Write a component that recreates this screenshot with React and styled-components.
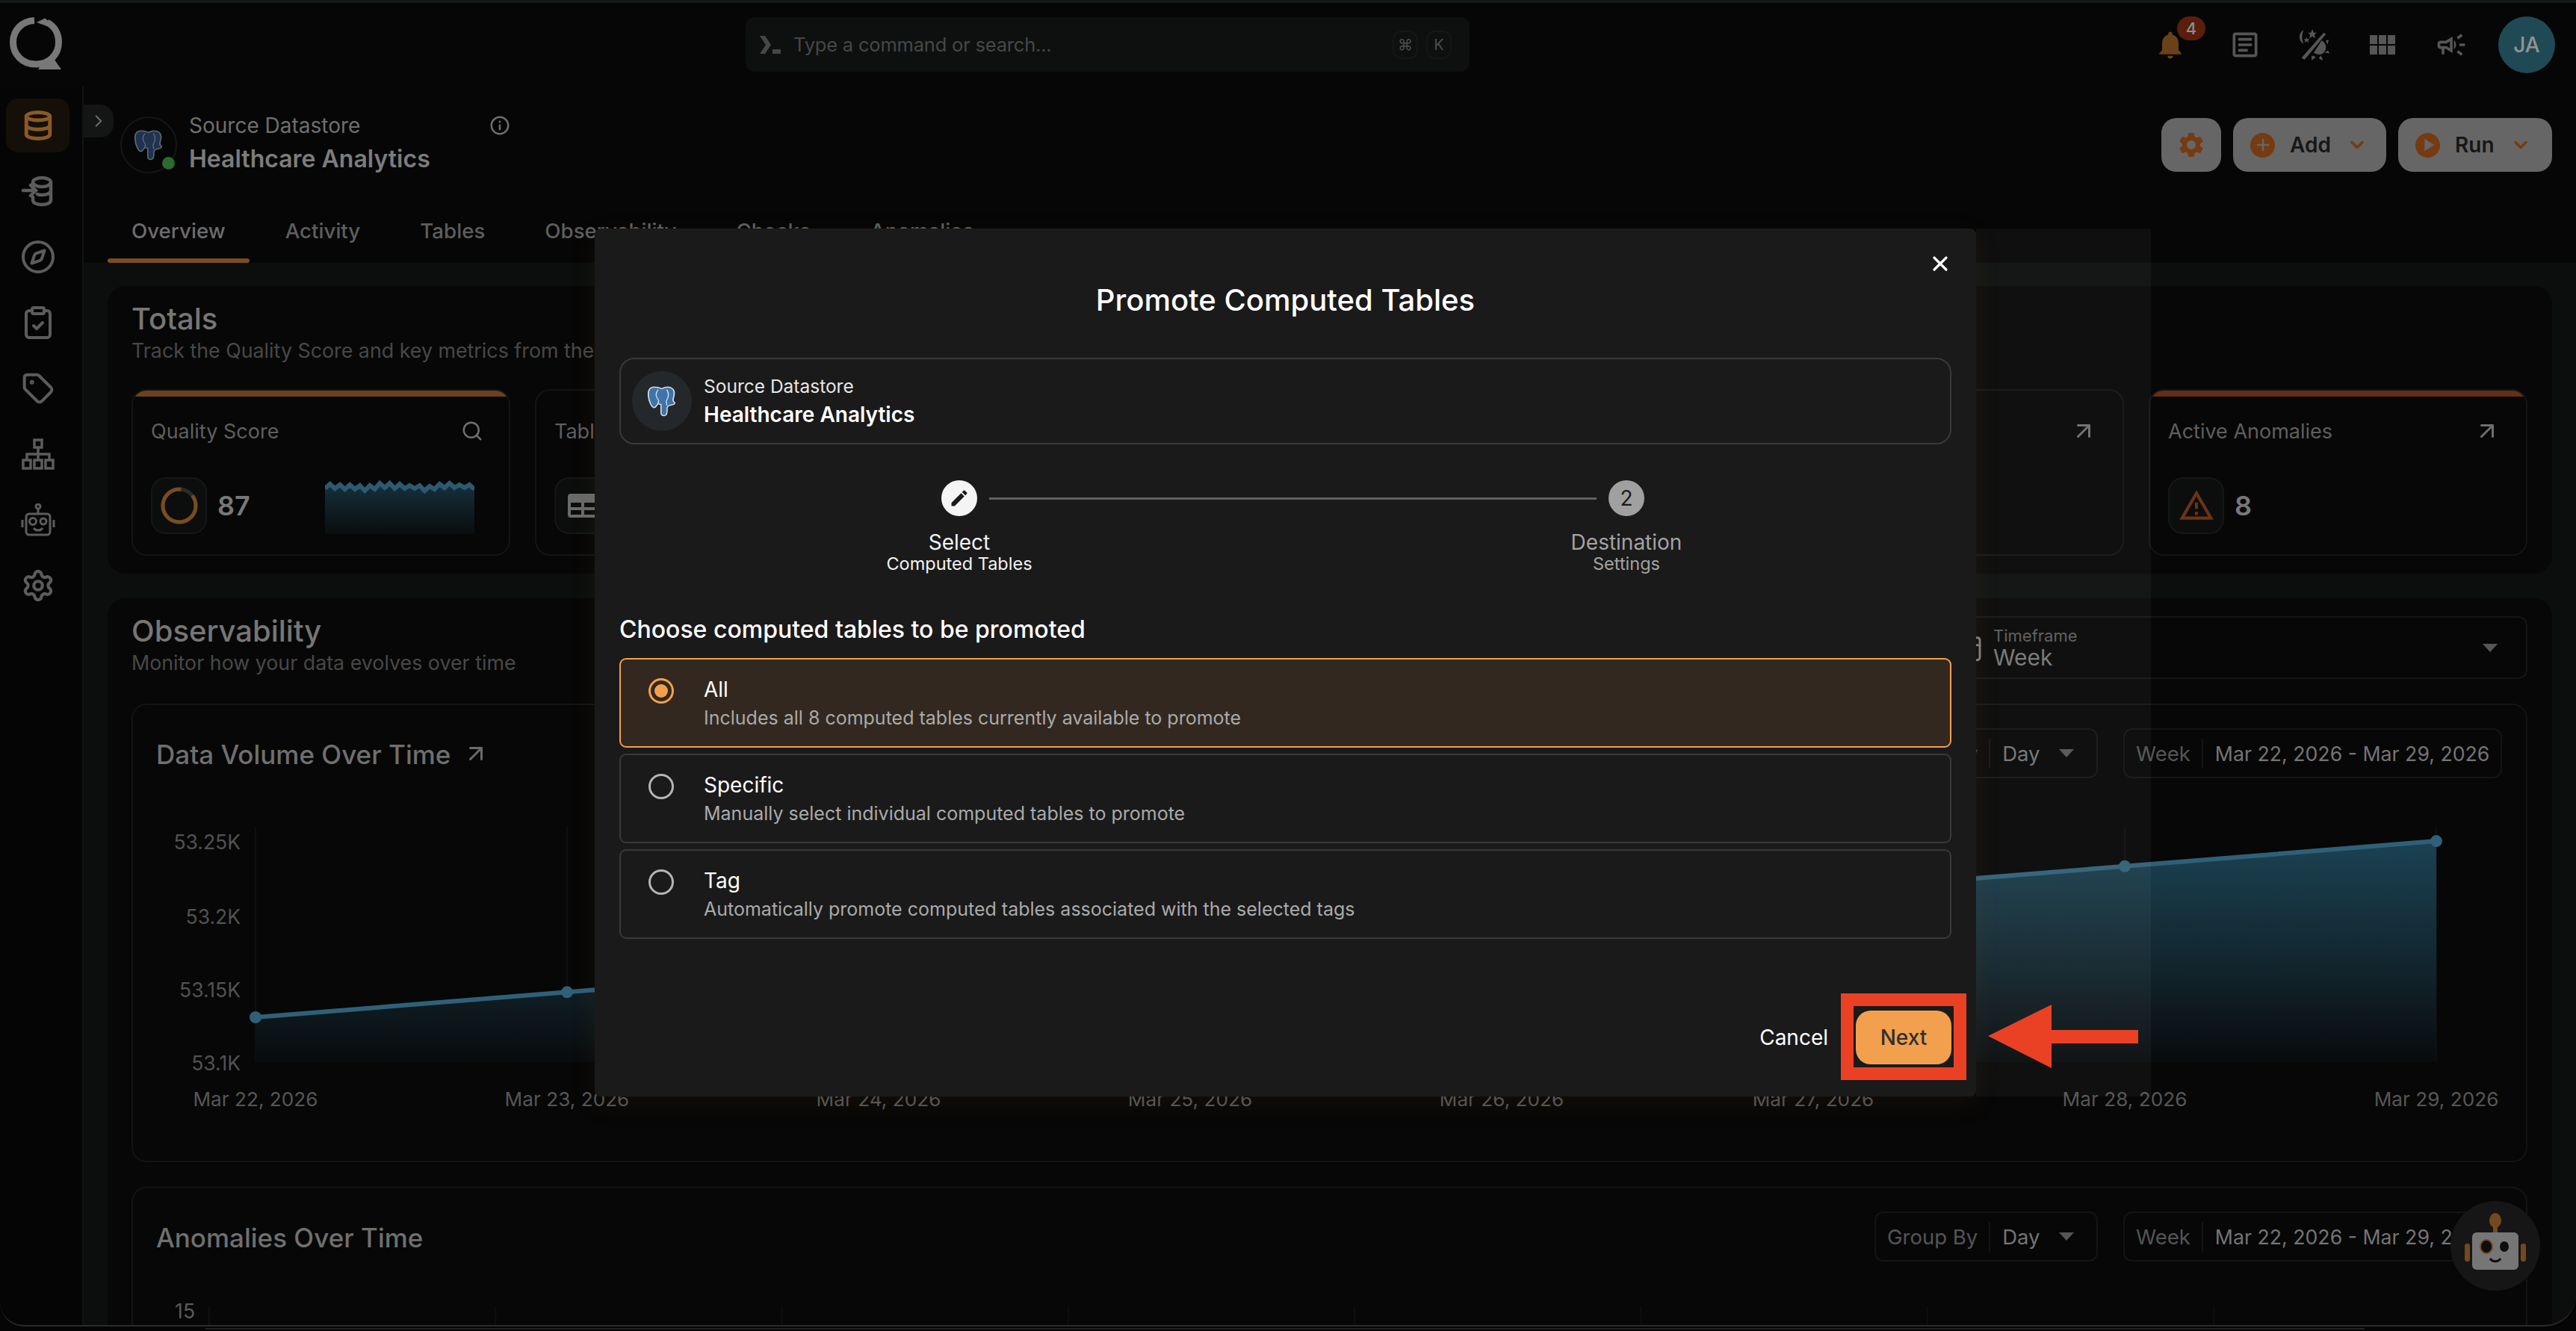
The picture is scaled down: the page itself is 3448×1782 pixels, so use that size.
import React from 'react';
import styled, { createGlobalStyle } from 'styled-components';
import { Database, Compass, ClipboardCheck, Tag, Settings, ChevronRight, ChevronDown, ArrowUpRight, Search, X, Calendar } from 'lucide-react';
import { MdNotifications, MdOutlineArticle, MdOutlineCampaign, MdSettings, MdEdit, MdInfoOutline, MdOutlineWarningAmber, MdAdd, MdPlayArrow } from 'react-icons/md';

const GlobalStyle = createGlobalStyle`
  html, body {
    margin: 0;
    padding: 0;
    background: #050505;
    overflow: hidden;
  }
  * { box-sizing: border-box; }
  body { font-family: Inter, "Liberation Sans", sans-serif; }
`;

const Shell = styled.div`
  position: relative;
  width: 3448px;
  height: 1782px;
  overflow: hidden;
  background: #060606;
  display: flex;
  flex-direction: column;
`;

const TopStripe = styled.div`
  height: 4px;
  flex: none;
  background: #151919;
`;

const TopBar = styled.header`
  height: 112px;
  flex: none;
  display: flex;
  align-items: flex-start;
  padding: 0 28px 0 13px;
  background: #060606;
`;

const LogoWrap = styled.div`
  width: 70px;
  height: 70px;
  margin-top: 19px;
  flex: none;
`;

const CommandBar = styled.div`
  width: 969px;
  height: 73px;
  margin: 19px 0 0 915px;
  border-radius: 12px;
  background: #0d100f;
  display: flex;
  align-items: center;
  padding: 0 24px 0 18px;
  color: #474747;
  font-size: 25.5px;
`;

const CommandText = styled.span`
  margin-left: 16px;
  flex: 1;
  letter-spacing: -0.2px;
`;

const Kbd = styled.span`
  width: 34px;
  height: 38px;
  margin-left: 11px;
  border: 2px solid #151716;
  border-radius: 12px;
  display: flex;
  align-items: center;
  justify-content: center;
  color: #4d4d4d;
  font-size: 20px;
`;

const TopIcons = styled.div`
  margin-left: auto;
  display: flex;
  align-items: center;
  gap: 48px;
  height: 112px;
`;

const TopIcon = styled.span`
  position: relative;
  width: 44px;
  height: 44px;
  display: flex;
  align-items: center;
  justify-content: center;
  color: ${(p) => p.$color || '#565656'};
  margin-right: ${(p) => p.$gapRight || 0}px;
`;

const Badge = styled.span`
  position: absolute;
  top: -16px;
  left: 31px;
  width: 38px;
  height: 32px;
  border-radius: 16px;
  background: #5a1e0c;
  color: #8d8d8d;
  font-size: 22px;
  font-weight: 500;
  display: flex;
  align-items: center;
  justify-content: center;
`;

const Avatar = styled.span`
  width: 76px;
  height: 76px;
  margin-left: -7px;
  border-radius: 50%;
  background: #1f4a55;
  color: #939393;
  font-size: 28px;
  font-weight: 500;
  display: flex;
  align-items: center;
  justify-content: center;
`;

const Body = styled.div`
  flex: 1;
  min-height: 0;
  display: flex;
`;

const Sidebar = styled.nav`
  width: 112px;
  flex: none;
  border-right: 2px solid #131313;
  background: #050505;
  padding: 16px 0 0 8px;
  display: flex;
  flex-direction: column;
  gap: 16px;
`;

const NavItem = styled.a`
  width: 85px;
  height: 72px;
  border-radius: 16px;
  background: ${(p) => (p.$active ? '#150f09' : 'transparent')};
  color: ${(p) => (p.$active ? '#8a5a26' : '#5c5c5c')};
  display: flex;
  align-items: center;
  justify-content: center;
`;

const Main = styled.main`
  position: relative;
  flex: 1;
  min-width: 0;
  display: flex;
  flex-direction: column;
`;

const CollapseTab = styled.span`
  position: absolute;
  top: 24px;
  left: 0;
  width: 40px;
  height: 44px;
  border-radius: 0 18px 18px 0;
  background: #141515;
  color: #6a6a6a;
  display: flex;
  align-items: center;
  justify-content: center;
`;

const PageHead = styled.section`
  height: 236px;
  flex: none;
  background: #060606;
  padding-top: 40px;
`;

const HeadRow = styled.div`
  height: 76px;
  display: flex;
  align-items: center;
  padding: 0 32px 0 49px;
`;

const StoreLogo = styled.span`
  position: relative;
  width: 76px;
  height: 76px;
  border-radius: 50%;
  border: 2px solid #161616;
  display: flex;
  align-items: center;
  justify-content: center;
  flex: none;
`;

const OnlineDot = styled.span`
  position: absolute;
  right: 1px;
  bottom: 3px;
  width: 17px;
  height: 17px;
  border-radius: 50%;
  background: #2c6a2e;
`;

const StoreText = styled.div`
  margin-left: 16px;
  width: 431px;
`;

const StoreLabelRow = styled.div`
  display: flex;
  align-items: center;
  justify-content: space-between;
  color: #6f6f6f;
  font-size: 28px;
  line-height: 34px;
  margin-top: -4px;
`;

const StoreName = styled.div`
  color: #7c7c7c;
  font-size: 32px;
  font-weight: 600;
  line-height: 40px;
  margin-top: 8px;
`;

const Actions = styled.div`
  margin-left: auto;
  display: flex;
  gap: 16px;
`;

const ActionButton = styled.button`
  width: ${(p) => p.$width}px;
  height: 72px;
  border: 0;
  border-radius: 20px;
  background: #666666;
  color: #171717;
  font: 600 28px Inter, sans-serif;
  display: flex;
  align-items: center;
  justify-content: ${(p) => (p.$iconOnly ? 'center' : 'flex-start')};
  padding: ${(p) => (p.$iconOnly ? 0 : '0 0 0 23px')};
`;

const ActionDisc = styled.span`
  width: 33px;
  height: 33px;
  border-radius: 50%;
  background: #753b12;
  color: #666666;
  margin-right: 20px;
  display: flex;
  align-items: center;
  justify-content: center;
`;

const ActionChevron = styled.span`
  margin-left: 21px;
  color: #753b12;
  display: flex;
`;

const Tabs = styled.div`
  height: 86px;
  margin: 34px 0 0 32px;
  display: flex;
  gap: 16px;
`;

const TabItem = styled.a`
  position: relative;
  padding: 0 32px;
  display: flex;
  align-items: center;
  color: ${(p) => (p.$active ? '#6d6d6d' : '#5e5e5e')};
  font-size: 27.7px;
  font-weight: 500;

  ${(p) => p.$active && `
    &::after {
      content: '';
      position: absolute;
      left: 0;
      right: 0;
      bottom: 0;
      height: 6px;
      border-radius: 3px;
      background: #7a4c20;
    }
  `}
`;

const Content = styled.div`
  flex: 1;
  min-height: 0;
  overflow: hidden;
  background: #0b0e0d;
  padding: 31px 32px 0;
  display: flex;
  flex-direction: column;
  gap: 33px;
`;

const Panel = styled.section`
  flex: ${(p) => (p.$grow ? 1 : 'none')};
  background: #070707;
  border-radius: 24px;
  padding: 20px 33px 24px 32px;
`;

const SectionTitle = styled.h2`
  margin: 0;
  color: #767676;
  font-size: 40px;
  font-weight: 500;
  line-height: 48px;
`;

const SectionSub = styled.p`
  margin: 2px 0 0;
  color: #484848;
  font-size: 26.8px;
  line-height: 32px;
  white-space: nowrap;
`;

const CardGrid = styled.div`
  margin-top: 36px;
  display: grid;
  grid-template-columns: repeat(6, 1fr);
  gap: 33px;
`;

const MetricCard = styled.article`
  position: relative;
  height: 223px;
  border: 2px solid #141414;
  border-radius: 20px;
  overflow: hidden;
  padding: 38px 24px 0;

  ${(p) => p.$accent && `
    &::before {
      content: '';
      position: absolute;
      top: 0;
      left: 0;
      right: 0;
      height: 8px;
      background: ${p.$accent};
    }
  `}
`;

const MetricHead = styled.div`
  height: 32px;
  display: flex;
  align-items: center;
  justify-content: space-between;
  color: #5f5f5f;
  font-size: 27px;
  padding-right: 10px;
`;

const MetricIcon = styled.span`
  color: #6e6e6e;
  display: flex;
`;

const MetricRow = styled.div`
  margin-top: 46px;
  display: flex;
  align-items: center;
`;

const MetricBox = styled.span`
  width: 75px;
  height: 76px;
  flex: none;
  border: 2px solid #151716;
  border-radius: 20px;
  background: #0b0e0d;
  display: flex;
  align-items: center;
  justify-content: center;
  color: ${(p) => p.$color || '#6a6a6a'};
`;

const MetricValue = styled.span`
  margin-left: 14px;
  color: #787878;
  font-size: 36px;
  font-weight: 600;
`;

const Spark = styled.svg`
  margin-left: auto;
  margin-right: 22px;
  display: block;
`;

const ObsHead = styled.div`
  display: flex;
  justify-content: space-between;
  align-items: flex-start;
  margin-bottom: 33px;
`;

const TimeSelect = styled.div`
  width: 790px;
  height: 84px;
  margin-top: 4px;
  border: 2px solid #151515;
  border-radius: 12px;
  padding: 0 38px 0 20px;
  display: flex;
  align-items: center;
  color: #7a7a7a;
`;

const TimeText = styled.div`
  margin-left: 13px;
  flex: 1;
`;

const TimeLabel = styled.div`
  color: #5c5c5c;
  font-size: 22px;
  line-height: 26px;
`;

const TimeValue = styled.div`
  color: #767676;
  font-size: 30px;
  line-height: 32px;
`;

const Caret = styled.span`
  width: 0;
  height: 0;
  flex: none;
  border-left: 10px solid transparent;
  border-right: 10px solid transparent;
  border-top: 11px solid #565656;
`;

const ChartCard = styled.article`
  height: ${(p) => p.$height}px;
  margin-bottom: 33px;
  border: 2px solid #131313;
  border-radius: 20px;
  padding: 31px 32px 0 31px;
`;

const ChartHead = styled.div`
  height: 67px;
  display: flex;
  align-items: center;
`;

const ChartTitle = styled.h3`
  margin: 0;
  padding-top: 3px;
  color: #6f6f6f;
  font-size: 35px;
  font-weight: 500;
`;

const TitleArrow = styled.span`
  margin-left: 16px;
  color: #6a6a6a;
  display: flex;
`;

const Controls = styled.div`
  margin-left: auto;
  display: flex;
  gap: 34px;
`;

const Control = styled.div`
  height: 67px;
  width: ${(p) => p.$width}px;
  border: 2px solid #141414;
  border-radius: 12px;
  padding: 0 30px 0 15px;
  display: flex;
  align-items: center;
  font-size: 27.5px;
  white-space: nowrap;
`;

const ControlLabel = styled.span`
  color: #555555;
  padding-right: 15px;
  height: 40px;
  line-height: 40px;
  border-right: 2px solid #141414;
  margin-right: 16px;
`;

const ControlValue = styled.span`
  color: #747474;
  flex: ${(p) => (p.$fill ? 1 : 'none')};
  font-size: ${(p) => (p.$fill ? 27.5 : 26.7)}px;
`;

const ChartSvg = styled.svg`
  display: block;
  margin-left: -31px;
  font-family: Inter, sans-serif;
`;

const GhostBand = styled.div`
  position: absolute;
  left: 2645px;
  top: 306px;
  width: 234px;
  height: 1162px;
  background: rgba(255, 255, 255, 0.04);
`;

const Dialog = styled.div`
  position: absolute;
  left: 796px;
  top: 306px;
  width: 1849px;
  height: 1162px;
  background: #1a1a1a;
  border-radius: 8px;
  box-shadow: 0 10px 36px rgba(140, 85, 30, 0.1);
  padding: 70px 33px 0;
  color: #ffffff;
`;

const CloseButton = styled.span`
  position: absolute;
  top: 31px;
  right: 32px;
  color: #ffffff;
  display: flex;
`;

const DialogTitle = styled.h2`
  margin: 0;
  text-align: center;
  font-size: 40px;
  font-weight: 500;
  line-height: 52px;
`;

const SourceCard = styled.div`
  margin-top: 51px;
  height: 116px;
  border: 2px solid #393939;
  border-radius: 20px;
  padding: 0 15px;
  display: flex;
  align-items: center;
`;

const SourceLogo = styled.span`
  width: 80px;
  height: 80px;
  border-radius: 50%;
  background: #25282b;
  display: flex;
  align-items: center;
  justify-content: center;
  flex: none;
`;

const SourceText = styled.div`
  margin-left: 16px;
`;

const SourceLabel = styled.div`
  font-size: 24.5px;
  line-height: 30px;
  color: #e6e6e6;
`;

const SourceName = styled.div`
  margin-top: 6px;
  font-size: 28px;
  font-weight: 600;
  line-height: 34px;
`;

const Stepper = styled.div`
  margin-top: 48px;
  padding: 0 285px 0 305px;
  display: flex;
`;

const Step = styled.div`
  width: 300px;
  flex: none;
  display: flex;
  flex-direction: column;
  align-items: center;
  color: ${(p) => (p.$done ? '#f2f2f2' : '#a3a3a3')};
`;

const StepCircle = styled.span`
  width: 48px;
  height: 48px;
  border-radius: 50%;
  background: ${(p) => (p.$done ? '#f4f4f4' : '#a0a0a0')};
  color: #1a1a1a;
  font-size: 28px;
  display: flex;
  align-items: center;
  justify-content: center;
`;

const StepLabel = styled.span`
  margin-top: 18px;
  font-size: 28px;
  line-height: 34px;
`;

const StepHint = styled.span`
  margin-top: -2px;
  font-size: 23.5px;
  line-height: 28px;
`;

const StepLine = styled.span`
  flex: 1;
  height: 3px;
  margin: 23px -110px 0;
  background: #616161;
`;

const ChooseTitle = styled.h3`
  margin: 54px 0 0;
  font-size: 32px;
  font-weight: 500;
  line-height: 40px;
`;

const OptionList = styled.div`
  margin-top: 18px;
  display: flex;
  flex-direction: column;
  gap: 8px;
`;

const Option = styled.label`
  height: 120px;
  border: 2px solid ${(p) => (p.$active ? '#f29f4b' : '#393939')};
  border-radius: 9px;
  background: ${(p) => (p.$active ? '#322820' : 'transparent')};
  padding: 23px 0 0 37px;
  display: flex;
`;

const Radio = styled.span`
  width: 34px;
  height: 34px;
  margin: 2px 40px 0 0;
  border-radius: 50%;
  border: 3px solid ${(p) => (p.$active ? '#f29f4b' : '#b5b5b5')};
  display: flex;
  align-items: center;
  justify-content: center;
  flex: none;

  &::after {
    content: '';
    width: 18px;
    height: 18px;
    border-radius: 50%;
    background: ${(p) => (p.$active ? '#f2a04e' : 'transparent')};
  }
`;

const OptionLabel = styled.div`
  font-size: 28px;
  line-height: 34px;
`;

const OptionDesc = styled.div`
  margin-top: 6px;
  color: #aaaaaa;
  font-size: 25px;
  line-height: 30px;
`;

const DialogFooter = styled.div`
  margin-top: 96px;
  display: flex;
  align-items: center;
  justify-content: flex-end;
  gap: 37px;
`;

const CancelLink = styled.span`
  font-size: 28px;
`;

const NextButton = styled.button`
  width: 128px;
  height: 72px;
  border: 0;
  border-radius: 20px;
  background: #f2a04e;
  color: #2f2f2f;
  font: 500 28px Inter, sans-serif;
`;

const CalloutBox = styled.div`
  position: absolute;
  left: 2464px;
  top: 1330px;
  width: 168px;
  height: 116px;
  border: 17px solid #ea4125;
`;

const CalloutArrow = styled.svg`
  position: absolute;
  left: 2661px;
  top: 1345px;
`;

const BotBubble = styled.span`
  position: absolute;
  left: 3280px;
  top: 1608px;
  width: 120px;
  height: 120px;
  border-radius: 50%;
  background: #161616;
  display: flex;
  align-items: center;
  justify-content: center;
`;

const WindowEdge = styled.div`
  position: absolute;
  left: 0;
  right: 0;
  top: 0;
  height: 1776px;
  border-bottom: 2px solid #2b2b2b;
  border-radius: 0 0 42px 32px;
  box-shadow: 0 0 0 24px #050505;
  pointer-events: none;
`;

const WindowEdgeBack = styled.div`
  position: absolute;
  left: 275px;
  width: 2890px;
  top: 1778px;
  height: 2px;
  background: #222222;
`;

const Logo = () => (
  <svg width="70" height="70" viewBox="0 0 70 70" fill="none">
    <path d="M33 4.5C17 5 4.5 17 4.5 33.5C4.5 50 17 63 35 63C53 63 65.5 50 65.5 33.5C65.5 22 60 12 50 7" stroke="#787878" strokeWidth="9" />
    <path d="M47 1.5L36 7L50 12L53 6Z" fill="#787878" />
    <path d="M48 56L58 54L69 70H38Z" fill="#787878" />
  </svg>
);

const Elephant = ({ fill = '#3f74ab', stroke = '#d5dde6' }) => (
  <svg width="40" height="42" viewBox="0 0 32 38" fill="none" preserveAspectRatio="none">
    <path d="M8 2C2 2 1 7 1.5 13C2 19 5 27 7.5 27C10 27 10.5 23 12 22C13 23 14 23 15 23L15 33C15 36 17 37 19 36.5C22 36 21.5 32 21.5 29C21.5 26 22 24.5 25 24C29 23.5 31 21.5 29 20C27 19 28 16 29 12C30 7 28 2 22 2C19 2 17.5 3 16 4C13 2.5 11 2 8 2Z" fill={fill} stroke={stroke} strokeWidth="1.3" />
    <path d="M12 5C9 9 9 14 12 17C13 19 12 21 12 22M21 5C24 9 23 15 21 18C20 20 21 22 21.5 24" stroke={stroke} strokeWidth="1.1" />
  </svg>
);

const DbArrowIcon = () => (
  <svg width="46" height="42" viewBox="0 0 46 42" fill="none" stroke="currentColor" strokeWidth="4.5" strokeLinecap="round">
    <ellipse cx="28" cy="9" rx="12" ry="6" />
    <path d="M16 10V14M40 9V33C40 37 34 39 28 39C22 39 16 37 16 33V29M40 20C40 24 34 26 28 26C26 26 24 26 22 25" />
    <path d="M3 20H19M13 13L20 20L13 27" />
  </svg>
);

const HierarchyIcon = () => (
  <svg width="44" height="42" viewBox="0 0 44 42" fill="none" stroke="currentColor" strokeWidth="3.5">
    <rect x="17" y="2" width="10" height="10" />
    <rect x="2" y="29" width="10" height="11" />
    <rect x="17" y="29" width="10" height="11" />
    <rect x="32" y="29" width="10" height="11" />
    <path d="M22 12V29M7 29V21H37V29" />
  </svg>
);

const RobotIcon = () => (
  <svg width="46" height="44" viewBox="0 0 46 44" fill="none" stroke="currentColor" strokeWidth="3">
    <circle cx="23" cy="4" r="3" />
    <path d="M23 7V14" />
    <rect x="7" y="14" width="32" height="28" rx="4" />
    <circle cx="16" cy="24" r="4.5" />
    <circle cx="30" cy="24" r="4" />
    <path d="M17 33C20 37 26 37 29 33M2 22V32M44 22V32" />
  </svg>
);

const ThemeIcon = () => (
  <svg width="46" height="46" viewBox="0 0 46 46" fill="#565656">
    <path d="M9 2C1 6 1 18 9 22C6 16 6 8 9 2Z" />
    <path d="M21 1L23 6H27L24 9L25 14L21 11L17 14L18 9L15 6H19Z" />
    <path d="M13 12L14 15H17L15 17L16 20L13 18L10 20L11 17L9 15H12Z" />
    <path d="M37 6L40 8L10 44L6 41Z" />
    <path d="M34 17C41 21 42 29 37 34C33 38 27 37 23 34Z" />
    <path d="M40 17L44 16L42 23ZM43 31L45 35L38 34ZM33 38L36 45L30 42ZM20 38L26 40L20 45Z" />
  </svg>
);

const GridIcon = () => (
  <svg width="34" height="26" viewBox="0 0 34 26" fill="#565656">
    <rect x="0" y="0" width="10" height="12" />
    <rect x="12" y="0" width="10" height="12" />
    <rect x="24" y="0" width="10" height="12" />
    <rect x="0" y="14" width="10" height="12" />
    <rect x="12" y="14" width="10" height="12" />
    <rect x="24" y="14" width="10" height="12" />
  </svg>
);

const TerminalIcon = () => (
  <svg width="30" height="30" viewBox="0 0 30 30" fill="#474747">
    <path d="M1 3H8L16 15L8 27H1L9 15Z" />
    <rect x="18" y="21" width="11" height="6" />
  </svg>
);

const TableIcon = () => (
  <svg width="40" height="32" viewBox="0 0 40 32" fill="none" stroke="currentColor" strokeWidth="4">
    <rect x="2" y="2" width="36" height="28" rx="2" fill="none" />
    <path d="M2 8H38" strokeWidth="8" />
    <path d="M2 20H38M20 8V30" />
  </svg>
);

const Ring = () => (
  <svg width="52" height="52" viewBox="0 0 52 52" fill="none">
    <circle cx="26" cy="26" r="22" stroke="#2a2a2a" strokeWidth="5" />
    <circle cx="26" cy="26" r="22" stroke="#7a4c20" strokeWidth="5" strokeDasharray="120 138" transform="rotate(-38 26 26)" />
  </svg>
);

const sparkPoints = [15, 9, 15, 10, 16, 10, 16, 11, 18, 11, 16, 8, 14, 8, 15, 9, 15, 11, 15, 11, 18, 12, 16, 9, 14, 8, 14, 10, 14, 10, 16];

const Sparkline = () => {
  const line = sparkPoints.map((y, i) => `${(i * 200) / (sparkPoints.length - 1)},${y}`).join(' ');
  return (
    <Spark width="200" height="76" viewBox="0 0 200 76" fill="none">
      <defs>
        <linearGradient id="sparkFill" x1="0" y1="0" x2="0" y2="1">
          <stop offset="0" stopColor="#16303c" />
          <stop offset="1" stopColor="#0a0d0e" />
        </linearGradient>
      </defs>
      <polygon points={`0,76 ${line} 200,76`} fill="url(#sparkFill)" />
      <polyline points={line} stroke="#2c5a72" strokeWidth="6" />
    </Spark>
  );
};

const dates = ['Mar 22, 2026', 'Mar 23, 2026', 'Mar 24, 2026', 'Mar 25, 2026', 'Mar 26, 2026', 'Mar 27, 2026', 'Mar 28, 2026', 'Mar 29, 2026'];
const volumeTicks = [['53.25K', 1128], ['53.2K', 1228], ['53.15K', 1326], ['53.1K', 1424]];
const plotX = (i) => 343 + i * 417;
const plotY = (i) => 1363 - i * 33.7;

const VolumeChart = () => {
  const line = dates.map((d, i) => `${plotX(i)},${plotY(i)}`).join(' ');
  return (
    <ChartSvg width="3202" height="510" viewBox="179 1043 3202 510" fill="none">
      <defs>
        <linearGradient id="areaFill" gradientUnits="userSpaceOnUse" x1="0" y1="1127" x2="0" y2="1423">
          <stop offset="0" stopColor="#1b4252" />
          <stop offset="0.6" stopColor="#11232b" />
          <stop offset="1" stopColor="#090b0c" />
        </linearGradient>
      </defs>
      {dates.map((d, i) => (
        <line key={d} x1={plotX(i)} x2={plotX(i)} y1="1108" y2="1423" stroke="#0f0f0f" strokeWidth="2" />
      ))}
      <polygon points={`343,1423 ${line} ${plotX(7)},1423`} fill="url(#areaFill)" />
      <polyline points={line} stroke="#2f6078" strokeWidth="6" />
      {dates.map((d, i) => (
        <circle key={d} cx={plotX(i)} cy={plotY(i)} r="8" fill="#2f6078" />
      ))}
      {volumeTicks.map(([label, y]) => (
        <text key={label} x="323" y={y + 10} textAnchor="end" fill="#525252" fontSize="26.5">{label}</text>
      ))}
      {dates.map((d, i) => (
        <text key={d} x={plotX(i)} y="1482" textAnchor="middle" fill="#565656" fontSize="26.2">{d}</text>
      ))}
    </ChartSvg>
  );
};

const AnomalyChart = () => (
  <ChartSvg width="3202" height="92" viewBox="179 1690 3202 92" fill="none">
    {[0, 1, 2, 3, 4, 5, 6, 7].map((i) => (
      <line key={i} x1={281 + i * 383.3} x2={281 + i * 383.3} y1="1750" y2="1782" stroke="#0f0f0f" strokeWidth="2" />
    ))}
    <text x="262" y="1766" textAnchor="end" fill="#5a5a5a" fontSize="26.5">15</text>
  </ChartSvg>
);

const ChartControls = () => (
  <Controls>
    <Control $width={299}>
      <ControlLabel>Group By</ControlLabel>
      <ControlValue $fill>Day</ControlValue>
      <Caret />
    </Control>
    <Control $width={507}>
      <ControlLabel>Week</ControlLabel>
      <ControlValue>Mar 22, 2026 - Mar 29, 2026</ControlValue>
    </Control>
  </Controls>
);

const metrics = [
  { label: 'Quality Score', accent: '#6a421c', corner: <Search size={30} />, box: <Ring />, value: '87', spark: true },
  { label: 'Tables', corner: <ArrowUpRight size={36} />, box: <TableIcon />, value: '8' },
  { label: 'Records', corner: <ArrowUpRight size={36} />, box: <TableIcon />, value: '53K' },
  { label: 'Fields', corner: <ArrowUpRight size={36} />, box: <TableIcon />, value: '120' },
  { label: 'Checks', corner: <ArrowUpRight size={36} />, box: <TableIcon />, value: '42' },
  { label: 'Active Anomalies', accent: '#642f14', corner: <ArrowUpRight size={36} />, box: <MdOutlineWarningAmber size={50} />, boxColor: '#6e3315', value: '8' },
];

const navIcons = [
  <Database key="db" size={42} strokeWidth={2.8} />,
  <DbArrowIcon key="dba" />,
  <Compass key="compass" size={48} strokeWidth={2} />,
  <ClipboardCheck key="checks" size={48} strokeWidth={2} />,
  <Tag key="tag" size={44} strokeWidth={2.2} />,
  <HierarchyIcon key="tree" />,
  <RobotIcon key="bot" />,
  <Settings key="settings" size={46} strokeWidth={2.2} />,
];

const tabs = ['Overview', 'Activity', 'Tables', 'Observability', 'Checks', 'Anomalies'];

const options = [
  { label: 'All', desc: 'Includes all 8 computed tables currently available to promote', active: true },
  { label: 'Specific', desc: 'Manually select individual computed tables to promote' },
  { label: 'Tag', desc: 'Automatically promote computed tables associated with the selected tags' },
];

export default function App() {
  return (
    <>
      <GlobalStyle />
      <Shell>
        <TopStripe />
        <TopBar>
          <LogoWrap><Logo /></LogoWrap>
          <CommandBar>
            <TerminalIcon />
            <CommandText>Type a command or search...</CommandText>
            <Kbd>⌘</Kbd>
            <Kbd>K</Kbd>
          </CommandBar>
          <TopIcons>
            <TopIcon $color="#6a4119" $gapRight={8}>
              <MdNotifications size={58} />
              <Badge>4</Badge>
            </TopIcon>
            <TopIcon><MdOutlineArticle size={50} /></TopIcon>
            <TopIcon><ThemeIcon /></TopIcon>
            <TopIcon><GridIcon /></TopIcon>
            <TopIcon><MdOutlineCampaign size={58} /></TopIcon>
            <Avatar>JA</Avatar>
          </TopIcons>
        </TopBar>
        <Body>
          <Sidebar>
            {navIcons.map((icon, i) => (
              <NavItem key={i} $active={i === 0}>{icon}</NavItem>
            ))}
          </Sidebar>
          <Main>
            <CollapseTab><ChevronRight size={26} /></CollapseTab>
            <PageHead>
              <HeadRow>
                <StoreLogo>
                  <Elephant fill="#1f3350" stroke="#5d6a78" />
                  <OnlineDot />
                </StoreLogo>
                <StoreText>
                  <StoreLabelRow>
                    Source Datastore
                    <MdInfoOutline size={30} />
                  </StoreLabelRow>
                  <StoreName>Healthcare Analytics</StoreName>
                </StoreText>
                <Actions>
                  <ActionButton $width={80} $iconOnly>
                    <MdSettings size={40} color="#753b12" />
                  </ActionButton>
                  <ActionButton $width={205}>
                    <ActionDisc><MdAdd size={28} /></ActionDisc>
                    Add
                    <ActionChevron><ChevronDown size={28} strokeWidth={3} /></ActionChevron>
                  </ActionButton>
                  <ActionButton $width={206}>
                    <ActionDisc><MdPlayArrow size={28} /></ActionDisc>
                    Run
                    <ActionChevron><ChevronDown size={28} strokeWidth={3} /></ActionChevron>
                  </ActionButton>
                </Actions>
              </HeadRow>
              <Tabs>
                {tabs.map((tab, i) => (
                  <TabItem key={tab} $active={i === 0}>{tab}</TabItem>
                ))}
              </Tabs>
            </PageHead>
            <Content>
              <Panel>
                <SectionTitle>Totals</SectionTitle>
                <SectionSub>Track the Quality Score and key metrics from the selected datastore</SectionSub>
                <CardGrid>
                  {metrics.map((m) => (
                    <MetricCard key={m.label} $accent={m.accent}>
                      <MetricHead>
                        {m.label}
                        <MetricIcon>{m.corner}</MetricIcon>
                      </MetricHead>
                      <MetricRow>
                        <MetricBox $color={m.boxColor}>{m.box}</MetricBox>
                        <MetricValue>{m.value}</MetricValue>
                        {m.spark && <Sparkline />}
                      </MetricRow>
                    </MetricCard>
                  ))}
                </CardGrid>
              </Panel>
              <Panel $grow>
                <ObsHead>
                  <div>
                    <SectionTitle>Observability</SectionTitle>
                    <SectionSub>Monitor how your data evolves over time</SectionSub>
                  </div>
                  <TimeSelect>
                    <Calendar size={40} strokeWidth={1.8} />
                    <TimeText>
                      <TimeLabel>Timeframe</TimeLabel>
                      <TimeValue>Week</TimeValue>
                    </TimeText>
                    <Caret />
                  </TimeSelect>
                </ObsHead>
                <ChartCard $height={614}>
                  <ChartHead>
                    <ChartTitle>Data Volume Over Time</ChartTitle>
                    <TitleArrow><ArrowUpRight size={36} /></TitleArrow>
                    <ChartControls />
                  </ChartHead>
                  <VolumeChart />
                </ChartCard>
                <ChartCard $height={260}>
                  <ChartHead>
                    <ChartTitle>Anomalies Over Time</ChartTitle>
                    <ChartControls />
                  </ChartHead>
                  <AnomalyChart />
                </ChartCard>
              </Panel>
            </Content>
          </Main>
        </Body>

        <GhostBand />
        <Dialog>
          <CloseButton><X size={32} strokeWidth={2.4} /></CloseButton>
          <DialogTitle>Promote Computed Tables</DialogTitle>
          <SourceCard>
            <SourceLogo><Elephant /></SourceLogo>
            <SourceText>
              <SourceLabel>Source Datastore</SourceLabel>
              <SourceName>Healthcare Analytics</SourceName>
            </SourceText>
          </SourceCard>
          <Stepper>
            <Step $done>
              <StepCircle $done><MdEdit size={28} /></StepCircle>
              <StepLabel>Select</StepLabel>
              <StepHint>Computed Tables</StepHint>
            </Step>
            <StepLine />
            <Step>
              <StepCircle>2</StepCircle>
              <StepLabel>Destination</StepLabel>
              <StepHint>Settings</StepHint>
            </Step>
          </Stepper>
          <ChooseTitle>Choose computed tables to be promoted</ChooseTitle>
          <OptionList>
            {options.map((o) => (
              <Option key={o.label} $active={o.active}>
                <Radio $active={o.active} />
                <div>
                  <OptionLabel>{o.label}</OptionLabel>
                  <OptionDesc>{o.desc}</OptionDesc>
                </div>
              </Option>
            ))}
          </OptionList>
          <DialogFooter>
            <CancelLink>Cancel</CancelLink>
            <NextButton>Next</NextButton>
          </DialogFooter>
        </Dialog>

        <CalloutBox />
        <CalloutArrow width="201" height="85" viewBox="0 0 201 85">
          <path d="M0 42L85 0V34H201V52H85V85Z" fill="#ea4125" />
        </CalloutArrow>

        <BotBubble>
          <svg width="88" height="90" viewBox="0 0 88 90">
            <ellipse cx="44" cy="11" rx="8" ry="10" fill="#74491f" />
            <rect x="41" y="18" width="6" height="10" fill="#74491f" />
            <rect x="13" y="27" width="62" height="50" rx="6" fill="#767676" />
            <rect x="3" y="42" width="7" height="24" rx="3" fill="#74491f" />
            <rect x="78" y="42" width="7" height="24" rx="3" fill="#74491f" />
            <ellipse cx="32" cy="46" rx="8" ry="9" fill="#0d0d0d" stroke="#74491f" strokeWidth="2" />
            <ellipse cx="56" cy="46" rx="6" ry="7" fill="#0d0d0d" />
            <path d="M37 62C40 67 48 67 51 62" fill="none" stroke="#0d0d0d" strokeWidth="3" />
          </svg>
        </BotBubble>

        <WindowEdge />
        <WindowEdgeBack />
      </Shell>
    </>
  );
}
